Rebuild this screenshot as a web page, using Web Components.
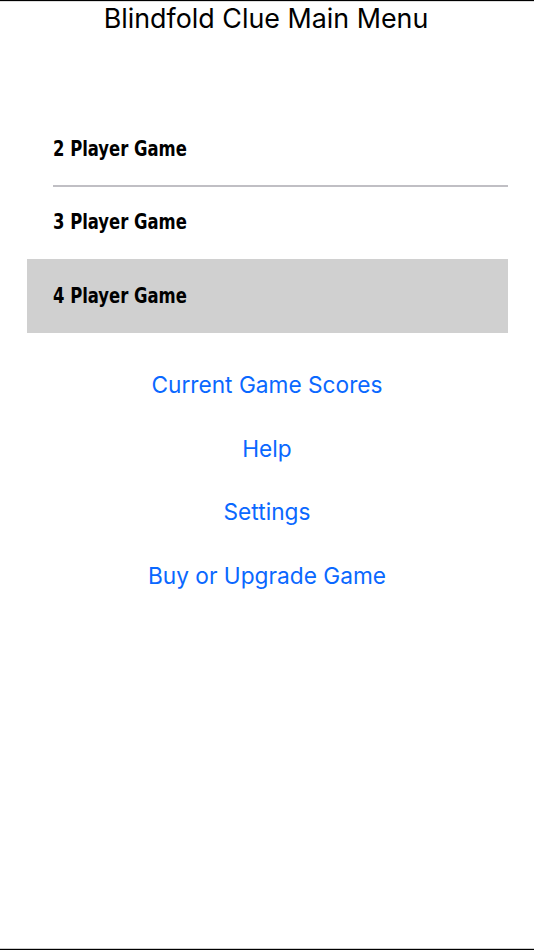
<!DOCTYPE html>
<html>
<head>
<meta charset="utf-8">
<title>Blindfold Clue Main Menu</title>
<style>
  html, body { margin: 0; height: 100%; background: #fff; }
</style>
</head>
<body>
<main-menu>
  <span slot="title">Blindfold Clue Main Menu</span>
  <game-row divider slot="games">2 Player Game</game-row>
  <game-row slot="games">3 Player Game</game-row>
  <game-row selected slot="games">4 Player Game</game-row>
  <link-button slot="links">Current Game Scores</link-button>
  <link-button slot="links">Help</link-button>
  <link-button slot="links">Settings</link-button>
  <link-button slot="links">Buy or Upgrade Game</link-button>
</main-menu>

<script>
class MainMenu extends HTMLElement {
  constructor() {
    super();
    const shadow = this.attachShadow({ mode: "open" });
    shadow.innerHTML = `
      <style>
        :host {
          display: flex;
          flex-direction: column;
          box-sizing: border-box;
          height: 950px;
          border-top: 1px solid #000;
          border-bottom: 1px solid #000;
          box-shadow: inset 0 -1px #ccc, inset 0 1px #ddd;
          font-family: Inter, "Liberation Sans", sans-serif;
        }
        .title {
          height: 37px;
          line-height: 35px;
          padding-right: 2px;
          text-align: center;
          font-size: 26.85px;
          color: #000;
        }
        .games {
          display: flex;
          flex-direction: column;
          margin: 74px 26px 0 27px;
        }
        .links {
          display: flex;
          flex-direction: column;
          margin-top: 20.5px;
        }
      </style>
      <div class="title"><slot name="title"></slot></div>
      <div class="games"><slot name="games"></slot></div>
      <div class="links"><slot name="links"></slot></div>
    `;
  }
}

class GameRow extends HTMLElement {
  constructor() {
    super();
    const shadow = this.attachShadow({ mode: "open" });
    shadow.innerHTML = `
      <style>
        :host {
          display: flex;
          align-items: center;
          position: relative;
          box-sizing: border-box;
          height: 73.5px;
          padding-left: 26px;
          font-family: "DejaVu Sans Condensed", "DejaVu Sans", sans-serif;
          font-weight: 700;
          font-size: 21px;
          color: #000;
        }
        :host([selected]) { background: #d0d0d0; }
        :host([divider])::after {
          content: "";
          position: absolute;
          left: 26px;
          right: 0;
          bottom: -1.5px;
          height: 2px;
          background: #c0bfc4;
        }
        /* no marker font here, so squeeze the bold one to the same width */
        .label {
          display: inline-block;
          transform: scaleX(0.87);
          transform-origin: left center;
          white-space: nowrap;
        }
      </style>
      <span class="label"><slot></slot></span>
    `;
  }
}

class LinkButton extends HTMLElement {
  constructor() {
    super();
    const shadow = this.attachShadow({ mode: "open" });
    shadow.innerHTML = `
      <style>
        :host {
          display: block;
          height: 63.5px;
          line-height: 63.5px;
          text-align: center;
          font-size: 22.7px;
          color: #0a68ff;
          cursor: pointer;
        }
      </style>
      <slot></slot>
    `;
  }
}

customElements.define("main-menu", MainMenu);
customElements.define("game-row", GameRow);
customElements.define("link-button", LinkButton);
</script>
</body>
</html>
